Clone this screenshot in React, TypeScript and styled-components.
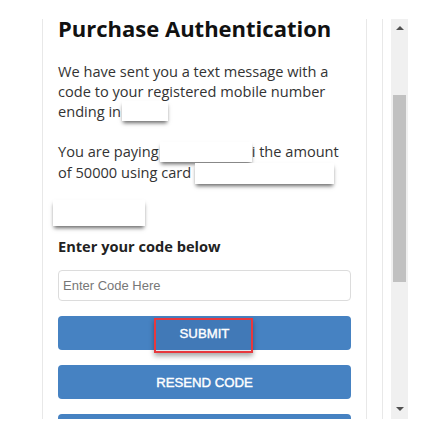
import React from "react";
import styled, { createGlobalStyle } from "styled-components";

const Global = createGlobalStyle`
  html, body { margin: 0; padding: 0; background: #fff; }
  body { font-family: "Open Sans", "Liberation Sans", sans-serif; }
`;

const Frame = styled.div`
  display: flex;
  align-items: stretch;
  margin: 19px 0 0 42px;
  height: 400px;
`;

const Panel = styled.div`
  width: 293px;
  padding: 0 15px;
  border-left: 1px solid #e8e8e8;
  border-right: 1px solid #e8e8e8;
  clip-path: inset(-30px 0 0 0);
`;

const SideStrip = styled.div`
  width: 15px;
  border-right: 1px solid #e8e8e8;
  margin-right: 8px;
`;

const ScrollTrack = styled.div`
  width: 17px;
  background: #f0f0f0;
  display: flex;
  flex-direction: column;
  align-items: center;
  justify-content: space-between;
  padding: 7px 0 8px;
  box-sizing: border-box;
  position: relative;
`;

const Arrow = styled.div<{ $down?: boolean }>`
  width: 0;
  height: 0;
  border-left: 4px solid transparent;
  border-right: 4px solid transparent;
  ${(p) => (p.$down ? "border-top: 4px solid #505050;" : "border-bottom: 4px solid #505050;")}
`;

const Thumb = styled.div`
  position: absolute;
  left: 2px;
  top: 76px;
  width: 13px;
  height: 187px;
  background: #c1c1c1;
`;

const Title = styled.h1`
  margin: 0;
  font-size: 22px;
  line-height: 18px;
  font-weight: 700;
  color: #111;
  white-space: nowrap;
`;

const Para = styled.p<{ $mt: number }>`
  margin: ${(p) => p.$mt}px 0 0;
  font-size: 14.6px;
  line-height: 20px;
  color: #333;
`;

const Blank = styled.span<{ $w: number; $h: number; $va: number; $ml?: number }>`
  display: inline-block;
  width: ${(p) => p.$w}px;
  height: ${(p) => p.$h}px;
  vertical-align: ${(p) => p.$va}px;
  margin-left: ${(p) => p.$ml ?? 0}px;
  background: #fff;
  box-shadow: 0 3px 4px -1px rgba(0, 0, 0, 0.6);
`;

const BlockBlank = styled.div`
  width: 92px;
  height: 26px;
  margin: 16px 0 0 -5px;
  background: #fff;
  box-shadow: 0 3px 4px -1px rgba(0, 0, 0, 0.6);
`;

const Heading = styled.h2`
  margin: 10px 0 0;
  font-size: 14.6px;
  line-height: 20px;
  font-weight: 700;
  color: #222;
`;

const CodeInput = styled.input`
  display: block;
  margin-top: 14px;
  height: 31px;
  box-sizing: border-box;
  width: 100%;
  border: 1px solid #dcdcdc;
  border-radius: 4px;
  padding: 0 4px;
  font-family: "Liberation Sans", Arial, sans-serif;
  font-size: 13px;
  color: #333;
  outline: none;
  &::placeholder { color: #777; }
`;

const Button = styled.button`
  margin-top: 15px;
  height: 34px;
  width: 100%;
  border: none;
  border-radius: 4px;
  background: #4682c2;
  color: #fff;
  font-family: "Liberation Sans", Arial, sans-serif;
  font-size: 13.2px;
  font-weight: 400;
  -webkit-text-stroke: 0.4px #fff;
  display: flex;
  align-items: center;
  justify-content: center;
  position: relative;
  padding: 0;
`;

const Highlight = styled.span`
  position: absolute;
  left: 96px;
  top: 2px;
  width: 99px;
  height: 35px;
  box-sizing: border-box;
  border: 2px solid #e8383d;
  background: rgba(30, 60, 110, 0.12);
  box-shadow: 0 3px 5px rgba(0, 0, 0, 0.35);
`;

const Label = styled.span`
  position: relative;
`;

export default function App() {
  return (
    <>
      <Global />
      <Frame>
        <Panel>
          <Title>Purchase Authentication</Title>
          <Para $mt={24}>
            We have sent you a text message with a code to your registered mobile number ending in
            <Blank $w={46} $h={20} $va={-4} $ml={1} />
          </Para>
          <Para $mt={20}>
            You are paying
            <Blank $w={92} $h={20} $va={-5} $ml={1} />
            i the amount of 50000 using card <Blank $w={139} $h={21} $va={-6} />
          </Para>
          <BlockBlank />
          <Heading>Enter your code below</Heading>
          <CodeInput placeholder="Enter Code Here" />
          <Button>
            <Highlight />
            <Label>SUBMIT</Label>
          </Button>
          <Button>RESEND CODE</Button>
          <Button>CANCEL</Button>
        </Panel>
        <SideStrip />
        <ScrollTrack>
          <Arrow />
          <Thumb />
          <Arrow $down />
        </ScrollTrack>
      </Frame>
    </>
  );
}
